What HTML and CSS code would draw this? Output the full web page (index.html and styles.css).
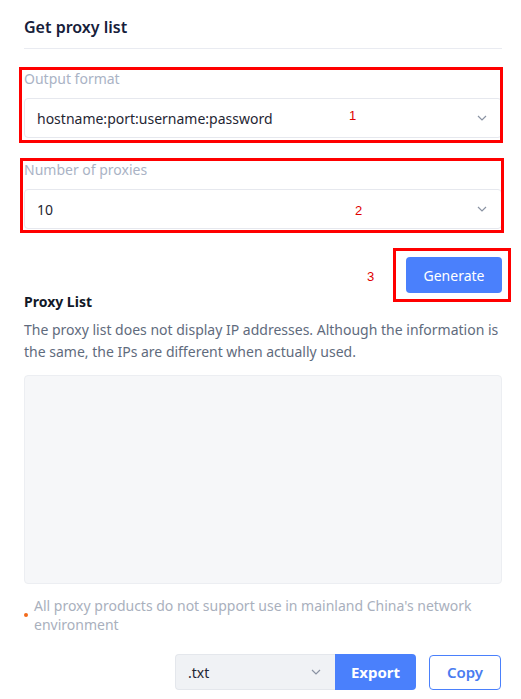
FILE: index.html
```html
<!DOCTYPE html>
<html lang="en">
<head>
<meta charset="utf-8">
<title>Get proxy list</title>
<link rel="stylesheet" href="styles.css">
</head>
<body>
<div class="page">
  <h1 class="title">Get proxy list</h1>

  <div class="field field-first">
    <div class="label">Output format</div>
    <div class="select">
      <span>hostname:port:username:password</span>
      <svg class="chev" viewBox="0 0 10 6" width="10" height="6"><path d="M1 1l4 4 4-4" fill="none" stroke="#8a93a3" stroke-width="1.2"/></svg>
    </div>
  </div>

  <div class="field">
    <div class="label">Number of proxies</div>
    <div class="select">
      <span>10</span>
      <svg class="chev" viewBox="0 0 10 6" width="10" height="6"><path d="M1 1l4 4 4-4" fill="none" stroke="#8a93a3" stroke-width="1.2"/></svg>
    </div>
  </div>

  <div class="gen-row">
    <button class="btn btn-primary btn-generate">Generate</button>
  </div>

  <h2 class="subtitle">Proxy List</h2>
  <p class="desc">The proxy list does not display IP addresses. Although the information is the same, the IPs are different when actually used.</p>

  <div class="output"></div>

  <div class="warning">
    <span class="dot"></span>
    <span class="warn-text">All proxy products do not support use in mainland China's network environment</span>
  </div>

  <div class="actions">
    <div class="export-group">
      <div class="ext-select">
        <span>.txt</span>
        <svg class="chev" viewBox="0 0 10 6" width="10" height="6"><path d="M1 1l4 4 4-4" fill="none" stroke="#8a93a3" stroke-width="1.2"/></svg>
      </div>
      <button class="btn btn-primary btn-export">Export</button>
    </div>
    <button class="btn btn-outline btn-copy">Copy</button>
  </div>

  <div class="mark mark-1"></div>
  <div class="mark mark-2"></div>
  <div class="mark mark-3"></div>
  <span class="num num-1">1</span>
  <span class="num num-2">2</span>
  <span class="num num-3">3</span>
</div>
</body>
</html>
```

FILE: styles.css
```css
* { box-sizing: border-box; }
html, body { margin: 0; padding: 0; background: #ffffff; }
body {
  font-family: "Noto Sans", "Open Sans", "Liberation Sans", sans-serif;
  font-size: 14px;
  color: #1f2633;
}
.page {
  position: relative;
  width: 521px;
  padding: 15px 19px 0 24px;
}
.title {
  margin: 0;
  font-size: 16px;
  line-height: 24px;
  font-weight: 600;
  color: #16203a;
  padding-bottom: 9px;
  border-bottom: 1px solid #e9ebf1;
}
.field { margin-top: 21px; }
.field-first { margin-top: 19px; }
.label {
  font-size: 14px;
  line-height: 22px;
  color: #aab3c5;
}
.select {
  margin-top: 8px;
  height: 40px;
  border: 1px solid #e6e8ee;
  border-radius: 4px;
  background: #fff;
  display: flex;
  align-items: center;
  justify-content: space-between;
  padding: 0 14px 0 12px;
  font-size: 14px;
  color: #1f2633;
}
.chev { display: block; }
.gen-row {
  margin-top: 28px;
  display: flex;
  justify-content: flex-end;
}
.btn {
  font-family: inherit;
  font-size: 14px;
  border-radius: 4px;
  cursor: pointer;
  padding: 0;
}
.btn-primary {
  background: #4a80fc;
  color: #fff;
  border: none;
}
.btn-generate {
  width: 96px;
  height: 36px;
  font-weight: 400;
}
.subtitle {
  margin: 0;
  font-size: 14px;
  line-height: 18px;
  font-weight: 700;
  color: #111827;
}
.desc {
  margin: 8px 0 0;
  font-size: 14px;
  line-height: 22px;
  color: #5f6b7d;
}
.output {
  margin-top: 12px;
  height: 209px;
  background: #f6f7f9;
  border: 1px solid #eceef2;
  border-radius: 4px;
}
.warning {
  margin-top: 12px;
  display: flex;
  align-items: center;
}
.dot {
  flex: none;
  width: 4px;
  height: 4px;
  border-radius: 50%;
  background: #f26a1b;
  margin: 0 6px 0 0;
}
.warn-text {
  font-size: 14px;
  line-height: 19px;
  color: #a9b0bd;
}
.actions {
  margin-top: 20px;
  display: flex;
  justify-content: flex-end;
  align-items: center;
  gap: 13px;
  padding-right: 1px;
}
.export-group { display: flex; height: 36px; }
.ext-select {
  width: 160px;
  height: 36px;
  background: #f0f2f5;
  border: 1px solid #e4e7ec;
  border-right: none;
  border-radius: 4px 0 0 4px;
  display: flex;
  align-items: center;
  justify-content: space-between;
  padding: 0 14px 0 12px;
  color: #1f2633;
}
.btn-export {
  width: 81px;
  height: 36px;
  border-radius: 0 4px 4px 0;
  font-weight: 700;
  font-size: 15px;
}
.btn-outline {
  background: #fff;
  border: 1px solid #4a80fc;
  color: #4a7cf0;
}
.btn-copy {
  width: 72px;
  height: 35px;
  font-weight: 600;
  font-size: 15px;
}
.mark {
  position: absolute;
  border: 3px solid #ff0000;
  pointer-events: none;
}
.mark-1 { left: 19px; top: 67px; width: 484px; height: 76px; }
.mark-2 { left: 20px; top: 158px; width: 484px; height: 75px; }
.mark-3 { left: 393px; top: 248px; width: 118px; height: 54px; }
.num {
  position: absolute;
  font-family: "Liberation Sans", Arial, sans-serif;
  font-size: 13px;
  line-height: 14px;
  color: #e00000;
}
.num-1 { left: 349px; top: 109px; }
.num-2 { left: 355px; top: 204px; }
.num-3 { left: 367px; top: 270px; }
```
